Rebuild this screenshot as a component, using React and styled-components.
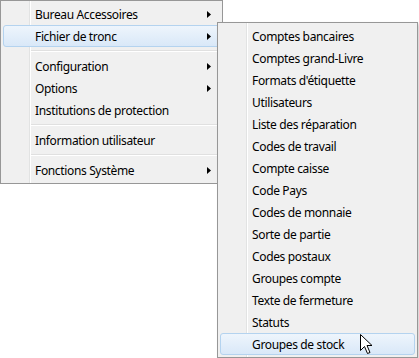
import React from "react";
import styled, { createGlobalStyle } from "styled-components";

const GlobalStyle = createGlobalStyle`
  html, body {
    margin: 0;
    padding: 0;
    background: #ffffff;
  }
  body {
    font-family: "Noto Sans", "Liberation Sans", sans-serif;
    font-size: 12px;
    letter-spacing: -0.35px;
    color: #000;
  }
`;

const Desktop = styled.div`
  position: relative;
  width: 419px;
  height: 358px;
  overflow: hidden;
`;

const Menu = styled.ul`
  list-style: none;
  margin: 0;
  padding: 2px;
  width: ${(p) => p.$width}px;
  box-sizing: border-box;
  border: 1px solid #979797;
  background-color: #f0f0f0;
  background-image: linear-gradient(
    to right,
    transparent 28px,
    #e2e3e3 28px,
    #e2e3e3 29px,
    #ffffff 29px,
    #ffffff 30px,
    transparent 30px
  );
`;

const SubMenu = styled(Menu)`
  position: absolute;
  left: 217px;
  top: 22px;
  box-shadow: 2px 2px 3px rgba(0, 0, 0, 0.18);
`;

const Item = styled.li`
  display: flex;
  align-items: center;
  height: 22px;
  box-sizing: border-box;
  padding: 0 8px 0 31px;
  border: 1px solid transparent;
  border-radius: 3px;
  white-space: nowrap;
  ${(p) =>
    p.$hot &&
    `
    border-color: #b4d3ef;
    background: linear-gradient(to bottom, #eef5fc, #d9e8f8);
  `}
`;

const Label = styled.span`
  flex: 1;
`;

const Separator = styled.li`
  height: 8px;
  margin-left: 28px;
  background: linear-gradient(
    to bottom,
    transparent 3px,
    #e0e0e0 3px,
    #e0e0e0 4px,
    #ffffff 4px,
    #ffffff 5px,
    transparent 5px
  );
`;

const Pointer = styled.svg`
  position: absolute;
  left: 360px;
  top: 334px;
`;

const Arrow = () => (
  <svg width="4" height="7" viewBox="0 0 4 7">
    <path d="M0 0 L4 3.5 L0 7 Z" fill="#000" />
  </svg>
);

const mainItems = [
  { label: "Bureau Accessoires", sub: true },
  { label: "Fichier de tronc", sub: true, hot: true },
  { sep: true },
  { label: "Configuration", sub: true },
  { label: "Options", sub: true },
  { label: "Institutions de protection" },
  { sep: true },
  { label: "Information utilisateur" },
  { sep: true },
  { label: "Fonctions Système", sub: true },
];

const subItems = [
  "Comptes bancaires",
  "Comptes grand-Livre",
  "Formats d'étiquette",
  "Utilisateurs",
  "Liste des réparation",
  "Codes de travail",
  "Compte caisse",
  "Code Pays",
  "Codes de monnaie",
  "Sorte de partie",
  "Codes postaux",
  "Groupes compte",
  "Texte de fermeture",
  "Statuts",
  "Groupes de stock",
];

const App = () => {
  return (
    <Desktop>
      <GlobalStyle />
      <Menu $width={223}>
        {mainItems.map((itm, index) =>
          itm.sep ? (
            <Separator key={index} />
          ) : (
            <Item key={index} $hot={itm.hot}>
              <Label>{itm.label}</Label>
              {itm.sub && <Arrow />}
            </Item>
          )
        )}
      </Menu>
      <SubMenu $width={201}>
        {subItems.map((item, index) => (
          <Item key={index} $hot={index === subItems.length - 1}>
            <Label>{item}</Label>
          </Item>
        ))}
      </SubMenu>
      <Pointer width="13" height="21" viewBox="0 0 13 21">
        <path
          d="M0.5 0.5 V16.5 L4.5 12.5 L7.5 19.5 L10 18.5 L7 11.5 H12 Z"
          fill="#fff"
          stroke="#000"
          strokeWidth="1"
          strokeLinejoin="miter"
        />
      </Pointer>
    </Desktop>
  );
};

export default App;
